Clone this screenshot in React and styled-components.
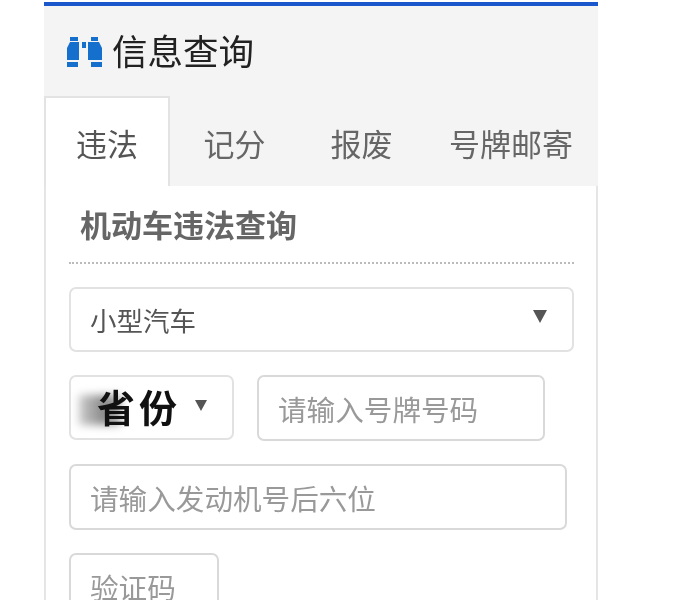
import React from "react";
import styled, { createGlobalStyle } from "styled-components";

const GlobalStyle = createGlobalStyle`
  html, body {
    margin: 0;
    height: 600px;
    overflow: hidden;
    background: #fff;
  }
  * {
    box-sizing: border-box;
  }
`;

const tabs = [
  { label: "违法", width: 126 },
  { label: "记分", width: 129 },
  { label: "报废", width: 125 },
  { label: "号牌邮寄", width: 174 },
];

const BinocularsIcon = () => (
  <svg width="38" height="34" viewBox="0 0 38 34" fill="#1470cc">
    <rect x="4" y="4" width="8" height="4" />
    <rect x="25" y="4" width="7" height="4" />
    <path d="M4 9h9v18H1V15z" />
    <path d="M22 9h11l3 6v12H22z" />
    <rect x="16" y="9" width="4" height="6" />
    <rect x="1" y="29" width="11" height="5" />
    <rect x="25" y="29" width="11" height="5" />
  </svg>
);

const App = () => {
  return (
    <Page>
      <GlobalStyle />
      <Panel>
        <Header>
          <BinocularsIcon />
          <HeaderTitle>信息查询</HeaderTitle>
        </Header>
        <TabBar>
          {tabs.map((tab, i) => (
            <Tab key={tab.label} $active={i === 0} $width={tab.width}>
              {tab.label}
            </Tab>
          ))}
        </TabBar>
        <Body>
          <FormTitle>机动车违法查询</FormTitle>
          <SelectBox>
            <SelectValue>小型汽车</SelectValue>
            <Caret />
          </SelectBox>
          <Row>
            <ProvinceBox>
              <Smudge />
              <ProvinceText>省份</ProvinceText>
              <SmallCaret />
            </ProvinceBox>
            <TextInput $width="288px" placeholder="请输入号牌号码" />
          </Row>
          <TextInput $width="498px" placeholder="请输入发动机号后六位" />
          <TextInput $width="150px" placeholder="验证码" />
        </Body>
      </Panel>
    </Page>
  );
};

export default App;

const Page = styled.div`
  padding: 2px 0 0 44px;
  height: 600px;
  overflow: hidden;
  font-family: "Noto Sans CJK SC", "Liberation Sans", sans-serif;
`;

const Panel = styled.div`
  width: 554px;
  border-top: 4px solid #1a56cc;
  filter: blur(0.5px);
`;

const Header = styled.div`
  height: 90px;
  background: #f4f4f4;
  display: flex;
  align-items: center;
  gap: 8px;
  padding: 0 0 2px 22px;
`;

const HeaderTitle = styled.h2`
  margin: 0;
  font-size: 35.5px;
  font-weight: 400;
  line-height: 40px;
  color: #222;
`;

const TabBar = styled.div`
  height: 90px;
  background: #f4f4f4;
  display: flex;
`;

const Tab = styled.div`
  flex: none;
  width: ${(p) => p.$width}px;
  padding-top: ${(p) => (p.$active ? "25px" : "27px")};
  text-align: center;
  font-size: 31px;
  line-height: 40px;
  color: ${(p) => (p.$active ? "#555" : "#666")};
  background: ${(p) => (p.$active ? "#fff" : "transparent")};
  border: ${(p) => (p.$active ? "2px solid #e3e3e3" : "none")};
  border-bottom: none;
`;

const Body = styled.div`
  padding: 0 23px;
  background: #fff;
  border-left: 2px solid #e5e5e5;
  border-right: 2px solid #e5e5e5;
  display: flex;
  flex-direction: column;
  align-items: flex-start;
  gap: 23px;
`;

const FormTitle = styled.h3`
  width: 505px;
  margin: 0;
  padding: 15px 0 15px 11px;
  height: 78px;
  font-size: 31px;
  font-weight: 700;
  line-height: 45px;
  color: #666;
  border-bottom: 2px dotted #bbb;
`;

const SelectBox = styled.div`
  width: 505px;
  height: 65px;
  padding: 0 25px 0 19px;
  display: flex;
  align-items: center;
  justify-content: space-between;
  border: 2px solid #e2e2e2;
  border-radius: 7px;
  background: #fff;
`;

const SelectValue = styled.span`
  font-size: 26.5px;
  color: #555;
`;

const Caret = styled.span`
  display: block;
  margin-bottom: 6px;
  width: 0;
  height: 0;
  border-left: 7px solid transparent;
  border-right: 7px solid transparent;
  border-top: 13px solid #555;
`;

const SmallCaret = styled(Caret)`
  margin-bottom: 4px;
  border-left-width: 6px;
  border-right-width: 6px;
  border-top-width: 11px;
`;

const Row = styled.div`
  display: flex;
  gap: 23px;
`;

const ProvinceBox = styled.div`
  position: relative;
  width: 165px;
  height: 65px;
  padding: 0 25px 0 26px;
  display: flex;
  align-items: center;
  justify-content: space-between;
  border: 2px solid #e2e2e2;
  border-radius: 7px;
  background: #fff;
`;

const Smudge = styled.span`
  position: absolute;
  left: 8px;
  top: 18px;
  width: 42px;
  height: 30px;
  background: linear-gradient(90deg, #ccc, #888 60%, #aaa);
  filter: blur(4px);
`;

const ProvinceText = styled.span`
  position: relative;
  margin-bottom: 4px;
  font-size: 38px;
  font-weight: 700;
  letter-spacing: 4px;
  color: #111;
  white-space: nowrap;
`;

const TextInput = styled.input`
  width: ${(p) => p.$width};
  height: 66px;
  padding: 0 19px;
  border: 2px solid #d9d9d9;
  border-radius: 7px;
  background: #fff;
  font-family: inherit;
  font-size: 28.6px;
  outline: none;

  &::placeholder {
    color: #999;
    opacity: 1;
  }
`;
